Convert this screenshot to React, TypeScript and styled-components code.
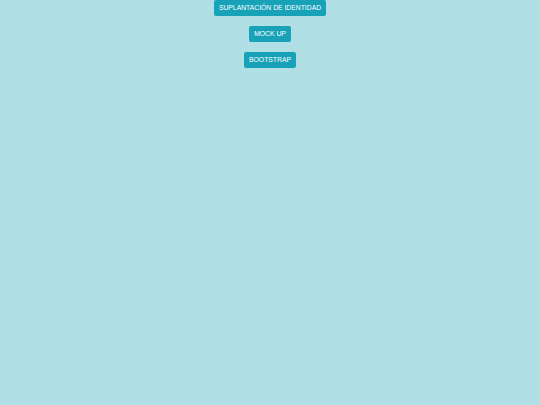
import React from "react";
import styled, { createGlobalStyle } from "styled-components";

const Global = createGlobalStyle`
  html, body { margin: 0; padding: 0; background: #b0e0e6; }
  body { font-family: "Liberation Sans", Arial, sans-serif; }
`;

const Page = styled.div`
  min-height: 405px;
  background: #b0e0e6;
  display: flex;
  flex-direction: column;
  align-items: center;
  gap: 10px;
`;

const Button = styled.button`
  height: 16px;
  padding: 0 5px;
  border: none;
  border-radius: 2px;
  background: #17a2b8;
  color: #ffffff;
  font-family: "Liberation Sans", Arial, sans-serif;
  font-size: 6.8px;
  font-weight: 400;
  line-height: 16px;
  text-transform: uppercase;
  cursor: pointer;
`;

export default function App() {
  return (
    <>
      <Global />
      <Page>
        <Button>SUPLANTACIÓN DE IDENTIDAD</Button>
        <Button>MOCK UP</Button>
        <Button>BOOTSTRAP</Button>
      </Page>
    </>
  );
}
